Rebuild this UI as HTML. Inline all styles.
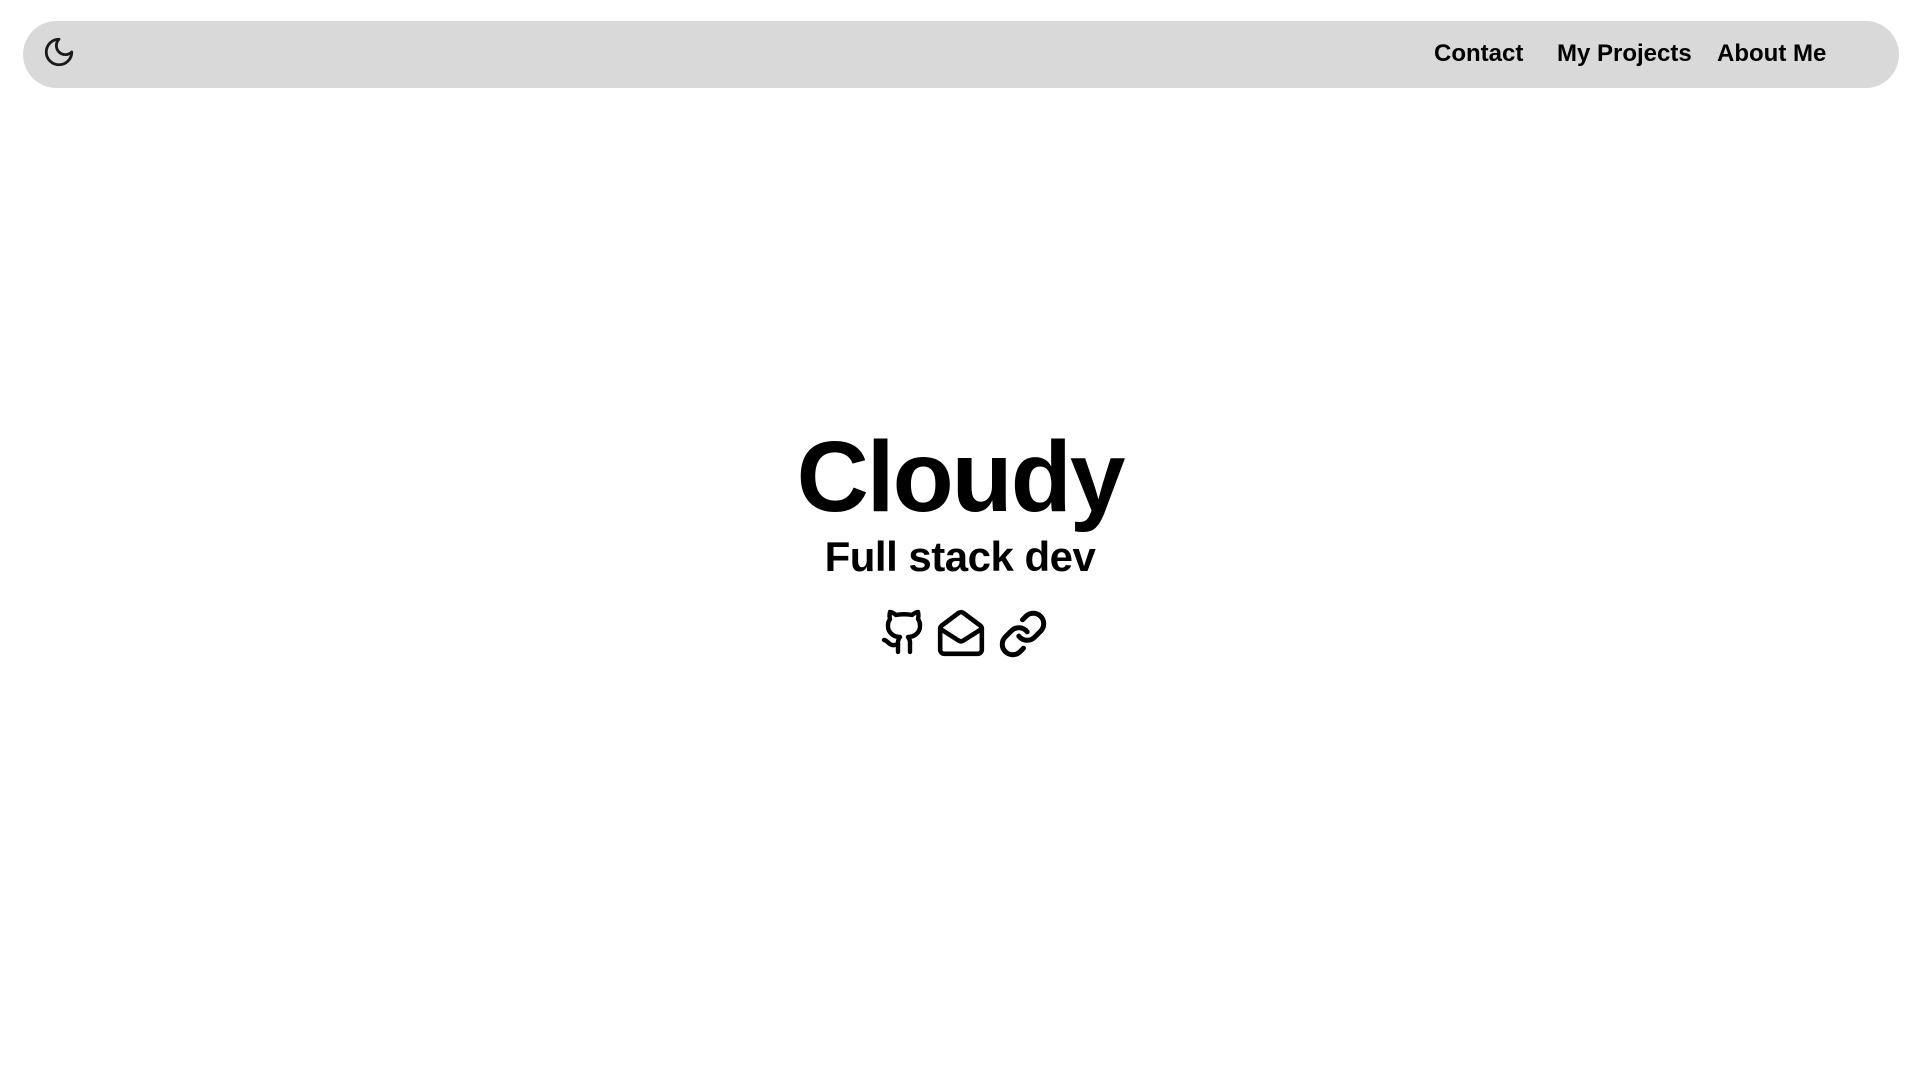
<!DOCTYPE html>
<html><head><style>
html,body{margin:0;width:1920px;height:1080px;background:#fff;overflow:hidden;font-family:"Liberation Sans",sans-serif;color:#000}
.nav{position:absolute;left:23px;top:21px;width:1876px;height:67px;background:#d9d9d9;border-radius:34px}
.nav a{position:absolute;top:19px;font-size:24px;font-weight:bold;color:#000;text-decoration:none;line-height:28px;white-space:nowrap}
h1{position:absolute;left:0;width:1920px;text-align:center;top:422px;margin:0;font-size:100px;font-weight:bold;line-height:110px;letter-spacing:-2px}
h2{position:absolute;left:0;width:1920px;text-align:center;top:531px;margin:0;font-size:42px;font-weight:bold;line-height:52px;letter-spacing:-0.5px}
svg{position:absolute}
</style></head><body>
<div class="nav">
<a style="left:1411px">Contact</a>
<a style="left:1534px">My Projects</a>
<a style="left:1694px">About Me</a>
</div>
<svg style="left:42px;top:35px" width="34" height="34" viewBox="0 0 24 24" fill="none" stroke="#1a1a1a" stroke-width="2" stroke-linecap="round" stroke-linejoin="round"><path d="M12 3a6 6 0 0 0 9 9 9 9 0 1 1-9-9Z"/></svg>
<h1>Cloudy</h1>
<h2>Full stack dev</h2>
<svg style="left:880px;top:608px" width="48" height="48" viewBox="0 0 24 24" fill="none" stroke="#000" stroke-width="2.2" stroke-linecap="round" stroke-linejoin="round"><path d="M15 22v-4a4.8 4.8 0 0 0-1-3.5c3 0 6-2 6-5.5.08-1.25-.27-2.480-1-3.5.28-1.15.28-2.35 0-3.5 0 0-1 0-3 1.5-2.64-.5-5.36-.5-8 0C6 2 5 2 5 2c-.3 1.15-.3 2.35 0 3.5A5.4 5.4 0 0 0 4 9c0 3.5 3 5.5 6 5.5-.39.49-.68 1.05-.85 1.65-.17.6-.22 1.23-.15 1.85v4"/><path d="M9 18c-4.51 2-5-2-7-2"/></svg>
<svg style="left:936px;top:608px" width="50" height="50" viewBox="0 0 24 24" fill="none" stroke="#000" stroke-width="2.2" stroke-linecap="round" stroke-linejoin="round"><path d="M21.2 8.4c.5.38.8.97.8 1.6v10a2 2 0 0 1-2 2H4a2 2 0 0 1-2-2V10a2 2 0 0 1 .8-1.6l8-6a2 2 0 0 1 2.4 0l8 6Z"/><path d="m22 10-8.970 5.7a1.94 1.94 0 0 1-2.06 0L2 10"/></svg>
<svg style="left:998px;top:609px" width="50" height="50" viewBox="0 0 24 24" fill="none" stroke="#000" stroke-width="2.4" stroke-linecap="round" stroke-linejoin="round"><path d="M10 13a5 5 0 0 0 7.54.54l3-3a5 5 0 0 0-7.07-7.07l-1.72 1.71"/><path d="M14 11a5 5 0 0 0-7.54-.54l-3 3a5 5 0 0 0 7.07 7.07l1.71-1.71"/></svg>
</body></html>
